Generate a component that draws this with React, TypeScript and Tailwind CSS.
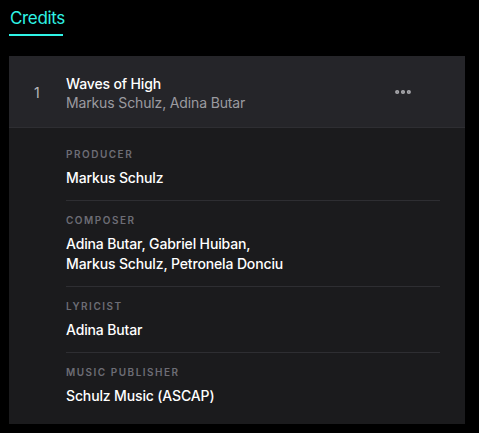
import { MoreHorizontal } from 'lucide-react'

const credits = [
  { role: 'Producer', names: ['Markus Schulz'] },
  { role: 'Composer', names: ['Adina Butar, Gabriel Huiban,', 'Markus Schulz, Petronela Donciu'] },
  { role: 'Lyricist', names: ['Adina Butar'] },
  { role: 'Music Publisher', names: ['Schulz Music (ASCAP)'] },
]

export default function App() {
  return (
    <div className="min-h-[433px] w-[479px] bg-black font-['Inter','Noto_Sans',sans-serif]">
      <div className="px-[9px] pt-[7px]">
        <div className="w-[54px] border-b-2 border-[#2ff3e6] pb-[5px] pl-[1px] text-[17px] leading-[22px] tracking-[-0.02em] text-[#2ff3e6]">
          Credits
        </div>
      </div>

      <div className="mx-[9px] mt-[20px] w-[456px] bg-[#1b1b1d]">
        <div className="flex h-[72px] items-center border-b border-[#2e2e32] bg-[#252529] pr-[52px]">
          <div className="w-[57px] pl-[25px] pt-[1px] text-[14px] text-[#b8b8bc]">1</div>
          <div className="flex-1 pt-[2px]">
            <div className="text-[14px] font-medium leading-[20px] tracking-[-0.01em] text-white">Waves of High</div>
            <div className="text-[14px] leading-[18px] tracking-[-0.01em] text-[#9b9ba0]">Markus Schulz, Adina Butar</div>
          </div>
          <MoreHorizontal className="h-5 w-5 text-[#a9a9ad]" strokeWidth={3} />
        </div>

        <div className="pb-[18px] pl-[57px] pr-[25px] pt-[7px]">
          {credits.map((c, i) => (
            <div
              key={c.role}
              className={i === credits.length - 1 ? 'pt-[12px]' : 'border-b border-[#2e2e32] pb-[12px] pt-[12px]'}
            >
              <div className="text-[10px] font-semibold uppercase leading-[14px] tracking-[0.15em] text-[#6d6d75]">
                {c.role}
              </div>
              <div className="mt-[7px] text-[14px] font-medium leading-[20px] tracking-[-0.01em] text-white">
                {c.names.map((n) => (
                  <div key={n}>{n}</div>
                ))}
              </div>
            </div>
          ))}
        </div>
      </div>
    </div>
  )
}
